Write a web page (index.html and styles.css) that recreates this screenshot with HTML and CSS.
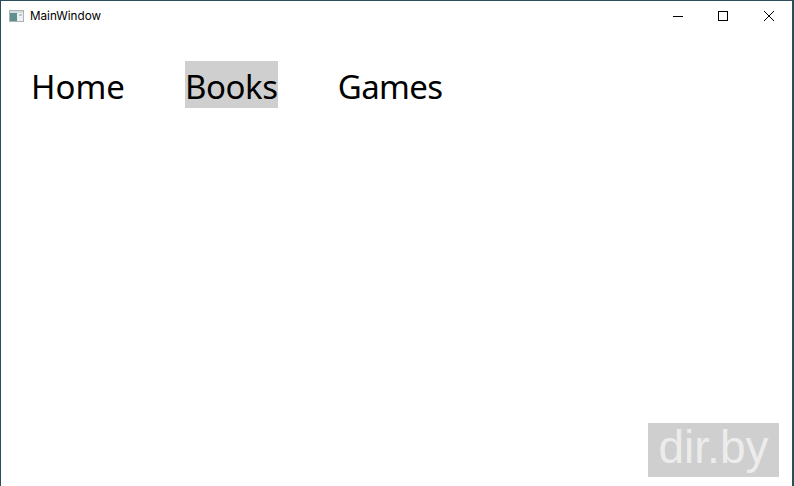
FILE: index.html
```html
<!DOCTYPE html>
<html lang="en">
    <head>
        <meta charset="UTF-8" />
        <title>MainWindow</title>
        <link rel="stylesheet" href="styles.css">
    </head>

    <body>
        <div class="window">
            <div class="titlebar">
                <svg class="app-icon" width="16" height="14" viewBox="0 0 16 14">
                    <rect x="0.5" y="1.5" width="14" height="11" fill="#eef1f2" stroke="#a9b3b6"/>
                    <rect x="1" y="4" width="7" height="8" fill="#5f8f8f"/>
                    <rect x="1" y="2" width="13" height="2" fill="#d5dcde"/>
                    <rect x="10" y="5" width="3" height="2" fill="#b8c8cc"/>
                </svg>
                <span class="title">MainWindow</span>
                <div class="controls">
                    <div class="control">
                        <svg width="12" height="12" viewBox="0 0 12 12"><path d="M1 6.5H11" stroke="#000" fill="none"/></svg>
                    </div>
                    <div class="control">
                        <svg width="12" height="12" viewBox="0 0 12 12"><rect x="1.5" y="1.5" width="9" height="9" stroke="#000" fill="none"/></svg>
                    </div>
                    <div class="control">
                        <svg width="12" height="12" viewBox="0 0 12 12"><path d="M1 1L11 11M11 1L1 11" stroke="#000" fill="none"/></svg>
                    </div>
                </div>
            </div>
            <div class="menu">
                <div class="menu-item">Home</div>
                <div class="menu-item active">Books</div>
                <div class="menu-item games">Games</div>
            </div>
            <div class="watermark">dir.by</div>
        </div>
    </body>
</html>
```

FILE: styles.css
```css
* {
    margin: 0;
    padding: 0;
    box-sizing: border-box;
}

html,
body {
    height: 100%;
}

body {
    overflow: hidden;
    background: #fff;
    font-family: "Open Sans", "Noto Sans", sans-serif;
    color: #000;
}

.window {
    position: relative;
    height: 100%;
    border: solid #2b4f5a;
    border-width: 1px 2px 0 1px;
}

.titlebar {
    display: flex;
    align-items: center;
    height: 29px;
    padding-left: 8px;
}

.app-icon {
    margin-right: 5px;
}

.title {
    font-size: 11.7px;
    font-family: "Inter", "Noto Sans", sans-serif;
}

.controls {
    display: flex;
    margin-left: auto;
}

.control {
    display: flex;
    align-items: center;
    justify-content: center;
    width: 45.5px;
    height: 29px;
}

.control:nth-child(2) {
    padding-right: 1px;
}

.menu {
    display: flex;
    gap: 60px;
    padding: 31px 0 0 30px;
}

.menu-item {
    height: 47px;
    line-height: 51px;
    font-size: 33px;
    font-family: "Noto Sans", sans-serif;
}

.active {
    background: #cfcfcf;
    letter-spacing: -0.4px;
}

.games {
    letter-spacing: -0.6px;
}

.watermark {
    position: absolute;
    right: 13px;
    bottom: 9px;
    width: 131px;
    height: 54px;
    background: #cfcfcf;
    color: #ececec;
    font-family: "Liberation Sans", sans-serif;
    font-size: 46px;
    line-height: 49px;
    text-align: center;
}
```
